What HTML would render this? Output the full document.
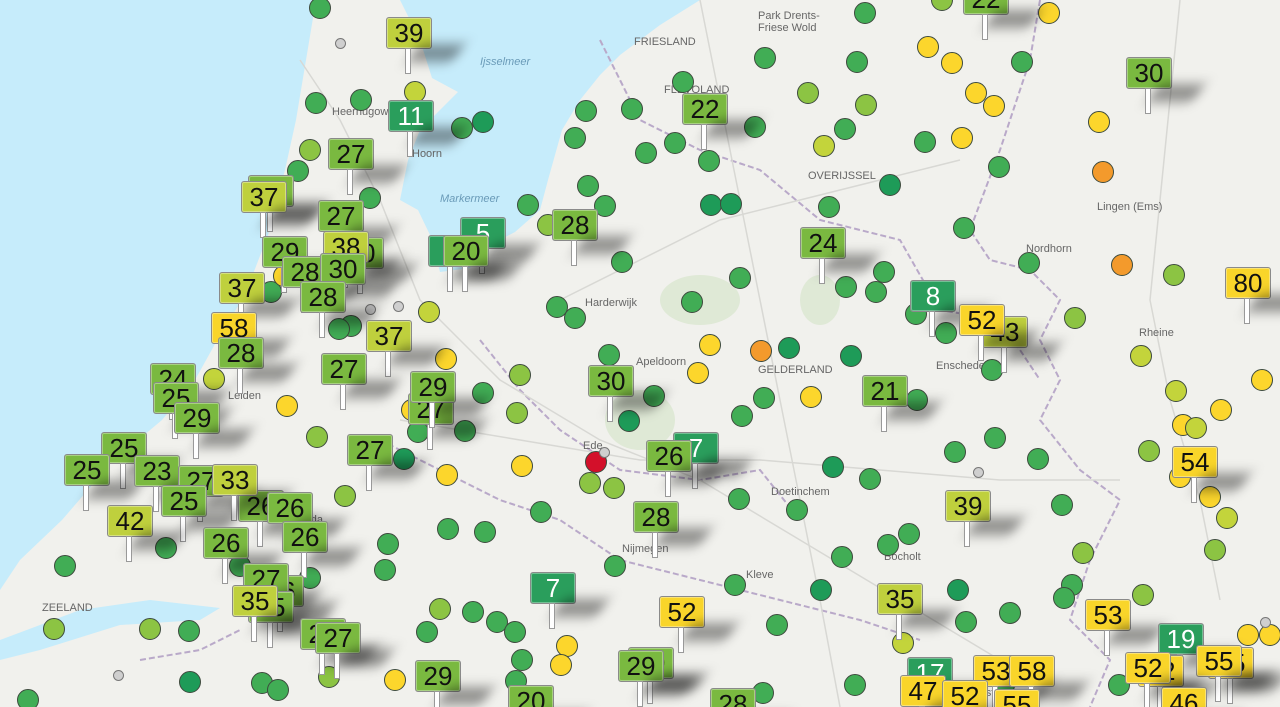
<!DOCTYPE html>
<html><head><meta charset="utf-8">
<style>
html,body{margin:0;padding:0;width:1280px;height:707px;overflow:hidden}
body{position:relative;background:#f1f1ed;font-family:"Liberation Sans",sans-serif}
svg.bg{position:absolute;left:0;top:0}
.c{position:absolute;width:22px;height:22px;margin:-11px 0 0 -11px;border-radius:50%;border:1px solid #3d4a3d;box-sizing:border-box}
.s{position:absolute;width:11px;height:11px;margin:-5px 0 0 -5px;border-radius:50%;background:#cfcfcf;border:1px solid #777;box-sizing:border-box}
.dg{background:#1e9b58}.g{background:#41ad55}.lg{background:#8cc443}.yg{background:#c3d43b}.y{background:#fcd62c}.o{background:#f39a2c}.r{background:#d3102a}
.m{position:absolute;width:44px;height:30px;margin:-15px 0 0 -22px;border:1px solid #8a8a8a;border-radius:3px;font-size:26px;line-height:31px;text-align:center;color:#111;box-shadow:inset 0 0 0 1px rgba(255,255,255,.35)}
.m::after{content:"";position:absolute;left:18px;top:30px;width:4px;height:24px;background:#fff;border:1px solid #999}
.m::before{content:"";position:absolute;left:26px;top:26px;width:46px;height:18px;background:rgba(0,0,0,.4);filter:blur(6px);transform:skewX(-30deg)}
.m.dg{color:#fff}
.m.g{background:#7ab940}
.m.yg{background:#bfd03d}
.m.y{background:#f9d52a}
.m.dg{background:#2a9e5c}
.t{position:absolute;font-size:11px;color:#666}
.w{position:absolute;font-size:11px;color:#6a9bb8;font-style:italic}
</style></head><body>
<svg class="bg" width="1280" height="707">
<path d="M0,0 L316,0 L306,60 L296,120 L285,170 L268,235 L245,295 L220,335 L195,380 L162,420 L112,462 L62,520 L20,560 L0,590 Z" fill="#c6ecfb"/>
<path d="M400,0 L700,0 L660,25 L620,55 L600,75 L580,100 L562,130 L548,180 L540,210 L515,232 L490,245 L470,268 L440,272 L430,235 L418,210 L400,200 L408,160 L420,130 L440,110 L458,92 L432,78 L420,40 Z" fill="#c6ecfb"/>
<path d="M0,640 L80,610 L150,600 L220,608 L200,620 L120,625 L40,650 L0,660 Z" fill="#c6ecfb"/>
<path d="M540,0 L600,0 L590,15 L560,20 Z" fill="#c6ecfb"/>
<g fill="none" stroke="#b9a9c9" stroke-width="2" stroke-dasharray="6,3">
<path d="M600,40 L640,120 L700,150 L760,170 L820,220 L900,240 L940,310 L1000,320 L1040,380"/>
<path d="M1040,0 L1030,60 L1000,150 L970,230 L990,260 L1030,270 L1060,300 L1040,340 L1060,380 L1040,420 L1080,470 L1120,500 L1090,560 L1070,620 L1110,660 L1090,707"/>
<path d="M480,340 L520,390 L560,430 L620,470 L700,480 L760,470 L800,520"/>
<path d="M380,440 L440,470 L500,500 L560,520 L620,560 L700,580 L780,600 L860,620 L920,640"/>
<path d="M140,660 L200,650 L240,630"/>
</g>
<g fill="none" stroke="#d8d8d4" stroke-width="1.5">
<path d="M300,60 L340,120 L380,200 L420,300 L500,380 L600,440 L700,480 L800,540 L900,600 L1000,660"/>
<path d="M560,300 L640,260 L720,220 L800,200 L880,180 L960,160"/>
<path d="M400,420 L520,440 L640,460 L760,460 L880,470 L1000,480 L1120,480"/>
<path d="M700,0 L720,100 L740,200 L760,300 L780,400 L800,500 L820,600 L840,707"/>
<path d="M1180,0 L1170,100 L1160,200 L1150,300 L1170,400 L1200,500 L1220,600"/>
</g>
<g fill="#dfe9d6"><ellipse cx="700" cy="300" rx="40" ry="25"/><ellipse cx="640" cy="420" rx="35" ry="30"/><ellipse cx="820" cy="300" rx="20" ry="25"/></g>
</svg>
<div class="t" style="left:332px;top:106px">Heerhugowaard</div>
<div class="t" style="left:412px;top:148px">Hoorn</div>
<div class="w" style="left:440px;top:193px">Markermeer</div>
<div class="w" style="left:480px;top:56px">Ijsselmeer</div>
<div class="t" style="left:634px;top:36px">FRIESLAND</div>
<div class="t" style="left:758px;top:10px">Park Drents-<br>Friese Wold</div>
<div class="t" style="left:664px;top:84px">FLEVOLAND</div>
<div class="t" style="left:585px;top:297px">Harderwijk</div>
<div class="t" style="left:636px;top:356px">Apeldoorn</div>
<div class="t" style="left:758px;top:364px">GELDERLAND</div>
<div class="t" style="left:808px;top:170px">OVERIJSSEL</div>
<div class="t" style="left:1097px;top:201px">Lingen (Ems)</div>
<div class="t" style="left:1026px;top:243px">Nordhorn</div>
<div class="t" style="left:1139px;top:327px">Rheine</div>
<div class="t" style="left:936px;top:360px">Enschede</div>
<div class="t" style="left:771px;top:486px">Doetinchem</div>
<div class="t" style="left:622px;top:543px">Nijmegen</div>
<div class="t" style="left:746px;top:569px">Kleve</div>
<div class="t" style="left:884px;top:551px">Bocholt</div>
<div class="t" style="left:968px;top:687px">Dorsten</div>
<div class="t" style="left:1014px;top:660px">Marl</div>
<div class="t" style="left:290px;top:514px">Gouda</div>
<div class="t" style="left:228px;top:390px">Leiden</div>
<div class="t" style="left:583px;top:440px">Ede</div>
<div class="t" style="left:42px;top:602px">ZEELAND</div>
<div class="c g" style="left:320px;top:8px"></div><div class="s" style="left:340px;top:43px"></div><div class="c g" style="left:316px;top:103px"></div><div class="c g" style="left:361px;top:100px"></div><div class="c yg" style="left:415px;top:92px"></div><div class="c g" style="left:462px;top:128px"></div><div class="c dg" style="left:483px;top:122px"></div><div class="c g" style="left:575px;top:138px"></div><div class="c g" style="left:586px;top:111px"></div><div class="c g" style="left:632px;top:109px"></div><div class="c g" style="left:646px;top:153px"></div><div class="c g" style="left:683px;top:82px"></div><div class="c g" style="left:675px;top:143px"></div><div class="c g" style="left:709px;top:161px"></div><div class="c g" style="left:765px;top:58px"></div><div class="c lg" style="left:808px;top:93px"></div><div class="c g" style="left:857px;top:62px"></div><div class="c g" style="left:865px;top:13px"></div><div class="c lg" style="left:942px;top:0px"></div><div class="c y" style="left:928px;top:47px"></div><div class="c y" style="left:952px;top:63px"></div><div class="c y" style="left:1049px;top:13px"></div><div class="c g" style="left:1022px;top:62px"></div><div class="c y" style="left:976px;top:93px"></div><div class="c y" style="left:994px;top:106px"></div><div class="c lg" style="left:866px;top:105px"></div><div class="c g" style="left:845px;top:129px"></div><div class="c yg" style="left:824px;top:146px"></div><div class="c y" style="left:962px;top:138px"></div><div class="c g" style="left:925px;top:142px"></div><div class="c g" style="left:999px;top:167px"></div><div class="c dg" style="left:890px;top:185px"></div><div class="c g" style="left:755px;top:127px"></div><div class="c y" style="left:1099px;top:122px"></div><div class="c o" style="left:1103px;top:172px"></div><div class="c g" style="left:588px;top:186px"></div><div class="c g" style="left:605px;top:206px"></div><div class="c g" style="left:528px;top:205px"></div><div class="c lg" style="left:548px;top:225px"></div><div class="c dg" style="left:711px;top:205px"></div><div class="c dg" style="left:731px;top:204px"></div><div class="c g" style="left:829px;top:207px"></div><div class="c g" style="left:964px;top:228px"></div><div class="c g" style="left:1029px;top:263px"></div><div class="c o" style="left:1122px;top:265px"></div><div class="c lg" style="left:1174px;top:275px"></div><div class="c lg" style="left:1075px;top:318px"></div><div class="c yg" style="left:1141px;top:356px"></div><div class="c yg" style="left:1176px;top:391px"></div><div class="c y" style="left:1262px;top:380px"></div><div class="c y" style="left:1221px;top:410px"></div><div class="c y" style="left:1183px;top:425px"></div><div class="c yg" style="left:1196px;top:428px"></div><div class="c lg" style="left:1149px;top:451px"></div><div class="c y" style="left:1180px;top:477px"></div><div class="c y" style="left:1210px;top:497px"></div><div class="c yg" style="left:1227px;top:518px"></div><div class="c lg" style="left:1215px;top:550px"></div><div class="c lg" style="left:1083px;top:553px"></div><div class="c lg" style="left:1143px;top:595px"></div><div class="c g" style="left:1072px;top:585px"></div><div class="c g" style="left:1064px;top:598px"></div><div class="c g" style="left:1010px;top:613px"></div><div class="c g" style="left:1062px;top:505px"></div><div class="c g" style="left:1038px;top:459px"></div><div class="c g" style="left:995px;top:438px"></div><div class="c g" style="left:955px;top:452px"></div><div class="s" style="left:978px;top:472px"></div><div class="c y" style="left:1248px;top:635px"></div><div class="c y" style="left:1270px;top:635px"></div><div class="s" style="left:1265px;top:622px"></div><div class="c g" style="left:1119px;top:685px"></div><div class="c g" style="left:622px;top:262px"></div><div class="c g" style="left:740px;top:278px"></div><div class="c g" style="left:692px;top:302px"></div><div class="c g" style="left:846px;top:287px"></div><div class="c g" style="left:876px;top:292px"></div><div class="c g" style="left:884px;top:272px"></div><div class="c g" style="left:946px;top:333px"></div><div class="c g" style="left:992px;top:370px"></div><div class="c g" style="left:916px;top:314px"></div><div class="c g" style="left:917px;top:400px"></div><div class="c dg" style="left:851px;top:356px"></div><div class="c dg" style="left:789px;top:348px"></div><div class="c o" style="left:761px;top:351px"></div><div class="c y" style="left:710px;top:345px"></div><div class="c y" style="left:698px;top:373px"></div><div class="c y" style="left:811px;top:397px"></div><div class="c g" style="left:764px;top:398px"></div><div class="c g" style="left:742px;top:416px"></div><div class="c g" style="left:654px;top:396px"></div><div class="c dg" style="left:629px;top:421px"></div><div class="c g" style="left:609px;top:355px"></div><div class="c g" style="left:557px;top:307px"></div><div class="c g" style="left:575px;top:318px"></div><div class="c lg" style="left:520px;top:375px"></div><div class="c lg" style="left:517px;top:413px"></div><div class="c g" style="left:483px;top:393px"></div><div class="c g" style="left:465px;top:431px"></div><div class="c y" style="left:446px;top:359px"></div><div class="c yg" style="left:429px;top:312px"></div><div class="s" style="left:398px;top:306px"></div><div class="c y" style="left:412px;top:410px"></div><div class="c g" style="left:418px;top:432px"></div><div class="c y" style="left:447px;top:475px"></div><div class="c dg" style="left:404px;top:459px"></div><div class="c y" style="left:522px;top:466px"></div><div class="c r" style="left:596px;top:462px"></div><div class="s" style="left:604px;top:452px"></div><div class="c lg" style="left:590px;top:483px"></div><div class="c lg" style="left:614px;top:488px"></div><div class="c g" style="left:541px;top:512px"></div><div class="c g" style="left:485px;top:532px"></div><div class="c g" style="left:448px;top:529px"></div><div class="c g" style="left:388px;top:544px"></div><div class="c g" style="left:385px;top:570px"></div><div class="c lg" style="left:345px;top:496px"></div><div class="c lg" style="left:317px;top:437px"></div><div class="c y" style="left:287px;top:406px"></div><div class="c yg" style="left:214px;top:379px"></div><div class="c g" style="left:271px;top:292px"></div><div class="c g" style="left:351px;top:326px"></div><div class="c g" style="left:339px;top:329px"></div><div class="s" style="left:370px;top:309px"></div><div class="c g" style="left:370px;top:198px"></div><div class="c lg" style="left:310px;top:150px"></div><div class="c g" style="left:298px;top:171px"></div><div class="c y" style="left:284px;top:276px"></div><div class="c g" style="left:65px;top:566px"></div><div class="c lg" style="left:54px;top:629px"></div><div class="c lg" style="left:150px;top:629px"></div><div class="c g" style="left:189px;top:631px"></div><div class="s" style="left:118px;top:675px"></div><div class="c dg" style="left:190px;top:682px"></div><div class="c g" style="left:262px;top:683px"></div><div class="c g" style="left:278px;top:690px"></div><div class="c lg" style="left:329px;top:677px"></div><div class="c y" style="left:395px;top:680px"></div><div class="c g" style="left:427px;top:632px"></div><div class="c lg" style="left:440px;top:609px"></div><div class="c g" style="left:473px;top:612px"></div><div class="c g" style="left:497px;top:622px"></div><div class="c g" style="left:515px;top:632px"></div><div class="c g" style="left:522px;top:660px"></div><div class="c g" style="left:516px;top:681px"></div><div class="c y" style="left:567px;top:646px"></div><div class="c y" style="left:561px;top:665px"></div><div class="c g" style="left:615px;top:566px"></div><div class="c g" style="left:735px;top:585px"></div><div class="c g" style="left:739px;top:499px"></div><div class="c g" style="left:797px;top:510px"></div><div class="c g" style="left:870px;top:479px"></div><div class="c dg" style="left:833px;top:467px"></div><div class="c g" style="left:842px;top:557px"></div><div class="c g" style="left:888px;top:545px"></div><div class="c g" style="left:909px;top:534px"></div><div class="c yg" style="left:903px;top:643px"></div><div class="c dg" style="left:958px;top:590px"></div><div class="c g" style="left:966px;top:622px"></div><div class="c g" style="left:855px;top:685px"></div><div class="c dg" style="left:821px;top:590px"></div><div class="c g" style="left:777px;top:625px"></div><div class="c g" style="left:763px;top:693px"></div><div class="c g" style="left:28px;top:700px"></div><div class="c g" style="left:1004px;top:685px"></div><div class="c g" style="left:240px;top:566px"></div><div class="c g" style="left:310px;top:578px"></div><div class="c g" style="left:166px;top:548px"></div>

<div class="m g" style="left:985px;top:-2px">22</div>
<div class="m yg" style="left:408px;top:32px">39</div>
<div class="m dg" style="left:410px;top:115px">11</div>
<div class="m g" style="left:1148px;top:72px">30</div>
<div class="m g" style="left:704px;top:108px">22</div>
<div class="m g" style="left:350px;top:153px">27</div>
<div class="m g" style="left:270px;top:190px">25</div>
<div class="m yg" style="left:263px;top:196px">37</div>
<div class="m g" style="left:340px;top:215px">27</div>
<div class="m g" style="left:574px;top:224px">28</div>
<div class="m dg" style="left:482px;top:232px">5</div>
<div class="m dg" style="left:450px;top:250px">5</div>
<div class="m g" style="left:465px;top:250px">20</div>
<div class="m g" style="left:822px;top:242px">24</div>
<div class="m g" style="left:360px;top:252px">30</div>
<div class="m g" style="left:284px;top:251px">29</div>
<div class="m yg" style="left:345px;top:246px">38</div>
<div class="m g" style="left:304px;top:271px">28</div>
<div class="m g" style="left:342px;top:268px">30</div>
<div class="m yg" style="left:241px;top:287px">37</div>
<div class="m y" style="left:1247px;top:282px">80</div>
<div class="m dg" style="left:932px;top:295px">8</div>
<div class="m g" style="left:322px;top:296px">28</div>
<div class="m y" style="left:233px;top:327px">58</div>
<div class="m yg" style="left:1004px;top:331px">43</div>
<div class="m y" style="left:981px;top:319px">52</div>
<div class="m yg" style="left:388px;top:335px">37</div>
<div class="m g" style="left:240px;top:352px">28</div>
<div class="m g" style="left:343px;top:368px">27</div>
<div class="m g" style="left:172px;top:378px">24</div>
<div class="m g" style="left:610px;top:380px">30</div>
<div class="m g" style="left:884px;top:390px">21</div>
<div class="m g" style="left:430px;top:408px">27</div>
<div class="m g" style="left:432px;top:386px">29</div>
<div class="m g" style="left:175px;top:397px">25</div>
<div class="m g" style="left:196px;top:417px">29</div>
<div class="m g" style="left:123px;top:447px">25</div>
<div class="m g" style="left:369px;top:449px">27</div>
<div class="m dg" style="left:695px;top:447px">7</div>
<div class="m g" style="left:668px;top:455px">26</div>
<div class="m y" style="left:1194px;top:461px">54</div>
<div class="m g" style="left:86px;top:469px">25</div>
<div class="m g" style="left:156px;top:470px">23</div>
<div class="m g" style="left:200px;top:480px">27</div>
<div class="m g" style="left:260px;top:505px">26</div>
<div class="m yg" style="left:234px;top:479px">33</div>
<div class="m g" style="left:183px;top:500px">25</div>
<div class="m g" style="left:289px;top:507px">26</div>
<div class="m yg" style="left:967px;top:505px">39</div>
<div class="m g" style="left:655px;top:516px">28</div>
<div class="m yg" style="left:129px;top:520px">42</div>
<div class="m g" style="left:304px;top:536px">26</div>
<div class="m g" style="left:225px;top:542px">26</div>
<div class="m g" style="left:280px;top:590px">26</div>
<div class="m g" style="left:265px;top:578px">27</div>
<div class="m g" style="left:270px;top:606px">25</div>
<div class="m yg" style="left:254px;top:600px">35</div>
<div class="m dg" style="left:552px;top:587px">7</div>
<div class="m yg" style="left:899px;top:598px">35</div>
<div class="m y" style="left:681px;top:611px">52</div>
<div class="m y" style="left:1107px;top:614px">53</div>
<div class="m g" style="left:322px;top:633px">27</div>
<div class="m g" style="left:337px;top:637px">27</div>
<div class="m dg" style="left:1180px;top:638px">19</div>
<div class="m y" style="left:1230px;top:662px">55</div>
<div class="m y" style="left:1218px;top:660px">55</div>
<div class="m y" style="left:1160px;top:670px">52</div>
<div class="m y" style="left:1147px;top:667px">52</div>
<div class="m g" style="left:650px;top:662px">29</div>
<div class="m g" style="left:640px;top:665px">29</div>
<div class="m g" style="left:437px;top:675px">29</div>
<div class="m dg" style="left:929px;top:672px">17</div>
<div class="m y" style="left:995px;top:670px">53</div>
<div class="m y" style="left:1031px;top:670px">58</div>
<div class="m y" style="left:922px;top:690px">47</div>
<div class="m y" style="left:964px;top:695px">52</div>
<div class="m y" style="left:1016px;top:704px">55</div>
<div class="m y" style="left:1183px;top:702px">46</div>
<div class="m g" style="left:732px;top:703px">28</div>
<div class="m g" style="left:530px;top:700px">20</div>
</body></html>
